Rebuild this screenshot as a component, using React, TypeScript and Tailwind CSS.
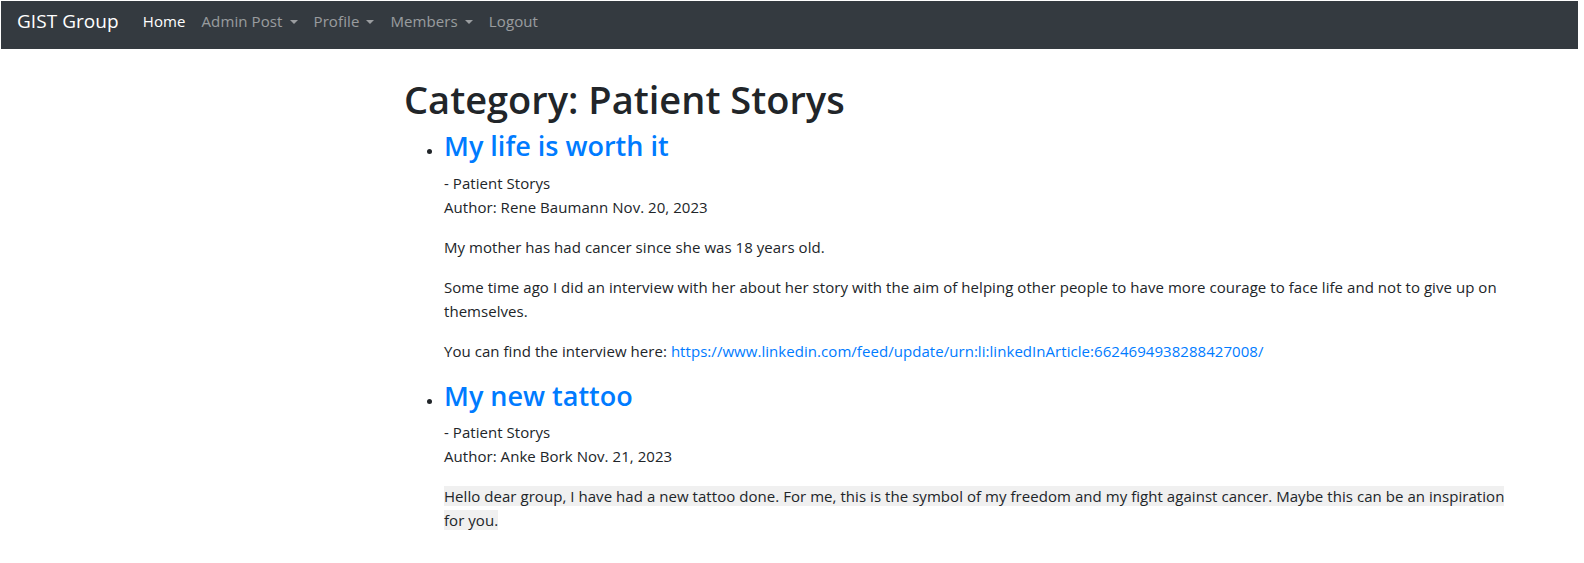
import React from "react";

type NavItem = { label: string; active?: boolean; dropdown?: boolean };

const navItems: NavItem[] = [
  { label: "Home", active: true },
  { label: "Admin Post", dropdown: true },
  { label: "Profile", dropdown: true },
  { label: "Members", dropdown: true },
  { label: "Logout" },
];

function Caret() {
  // bootstrap style dropdown-toggle triangle
  return (
    <span className="ml-[7px] inline-block align-[0.2em] border-x-[4.8px] border-t-[4.8px] border-b-0 border-x-transparent border-t-current" />
  );
}

function Navbar() {
  return (
    <nav className="ml-px mr-[6px] mt-px flex h-12 items-center bg-[#343a40] px-4 pb-2">
      <a href="#" className="mr-4 text-[19px] leading-[30px] text-white">
        GIST Group
      </a>
      <ul className="flex">
        {navItems.map((item) => (
          <li key={item.label}>
            <a
              href="#"
              className={
                item.active
                  ? "block px-2 text-[15px] leading-6 tracking-[0.1px] text-white"
                  : "block px-2 text-[15px] leading-6 tracking-[0.1px] text-white/50"
              }
            >
              {item.label}
              {item.dropdown && <Caret />}
            </a>
          </li>
        ))}
      </ul>
    </nav>
  );
}

export default function App() {
  return (
    <div className="min-h-screen bg-white font-['Open_Sans','Noto_Sans',sans-serif] text-[15px] leading-6 tracking-[0.05px] text-[#212529]">
      <Navbar />

      <main className="ml-[404px] w-[1110px] pt-[26px]">
        <h1 className="mb-[6px] text-[38px] font-semibold leading-[48px] tracking-normal">Category: Patient Storys</h1>
        <ul className="list-disc pl-10">
          <li>
            <h3 className="mb-2 text-[27px] font-semibold leading-[33.6px] tracking-normal">
              <a href="#" className="text-[#007bff]">
                My life is worth it
              </a>
            </h3>
            <p className="mb-4">
              - Patient Storys
              <br />
              Author: Rene Baumann Nov. 20, 2023
            </p>
            <p className="mb-4">My mother has had cancer since she was 18 years old.</p>
            <p className="mb-4 whitespace-nowrap">
              Some time ago I did an interview with her about her story with the aim of helping other people to have
              more courage to face life and not to give up on
              <br />
              themselves.
            </p>
            <p className="mb-4">
              You can find the interview here:{" "}
              <a href="#" className="text-[#007bff]">
                https://www.linkedin.com/feed/update/urn:li:linkedInArticle:6624694938288427008/
              </a>
            </p>
          </li>
          <li>
            <h3 className="mb-2 text-[27px] font-semibold leading-[33.6px] tracking-normal">
              <a href="#" className="text-[#007bff]">
                My new tattoo
              </a>
            </h3>
            <p className="mb-4">
              - Patient Storys
              <br />
              Author: Anke Bork Nov. 21, 2023
            </p>
            <p className="mb-4 whitespace-nowrap">
              <span className="bg-[#f0f0f0]">
                Hello dear group, I have had a new tattoo done. For me, this is the symbol of my freedom and my fight
                against cancer. Maybe this can be an inspiration
                <br />
                for you.
              </span>
            </p>
          </li>
        </ul>
      </main>
    </div>
  );
}
